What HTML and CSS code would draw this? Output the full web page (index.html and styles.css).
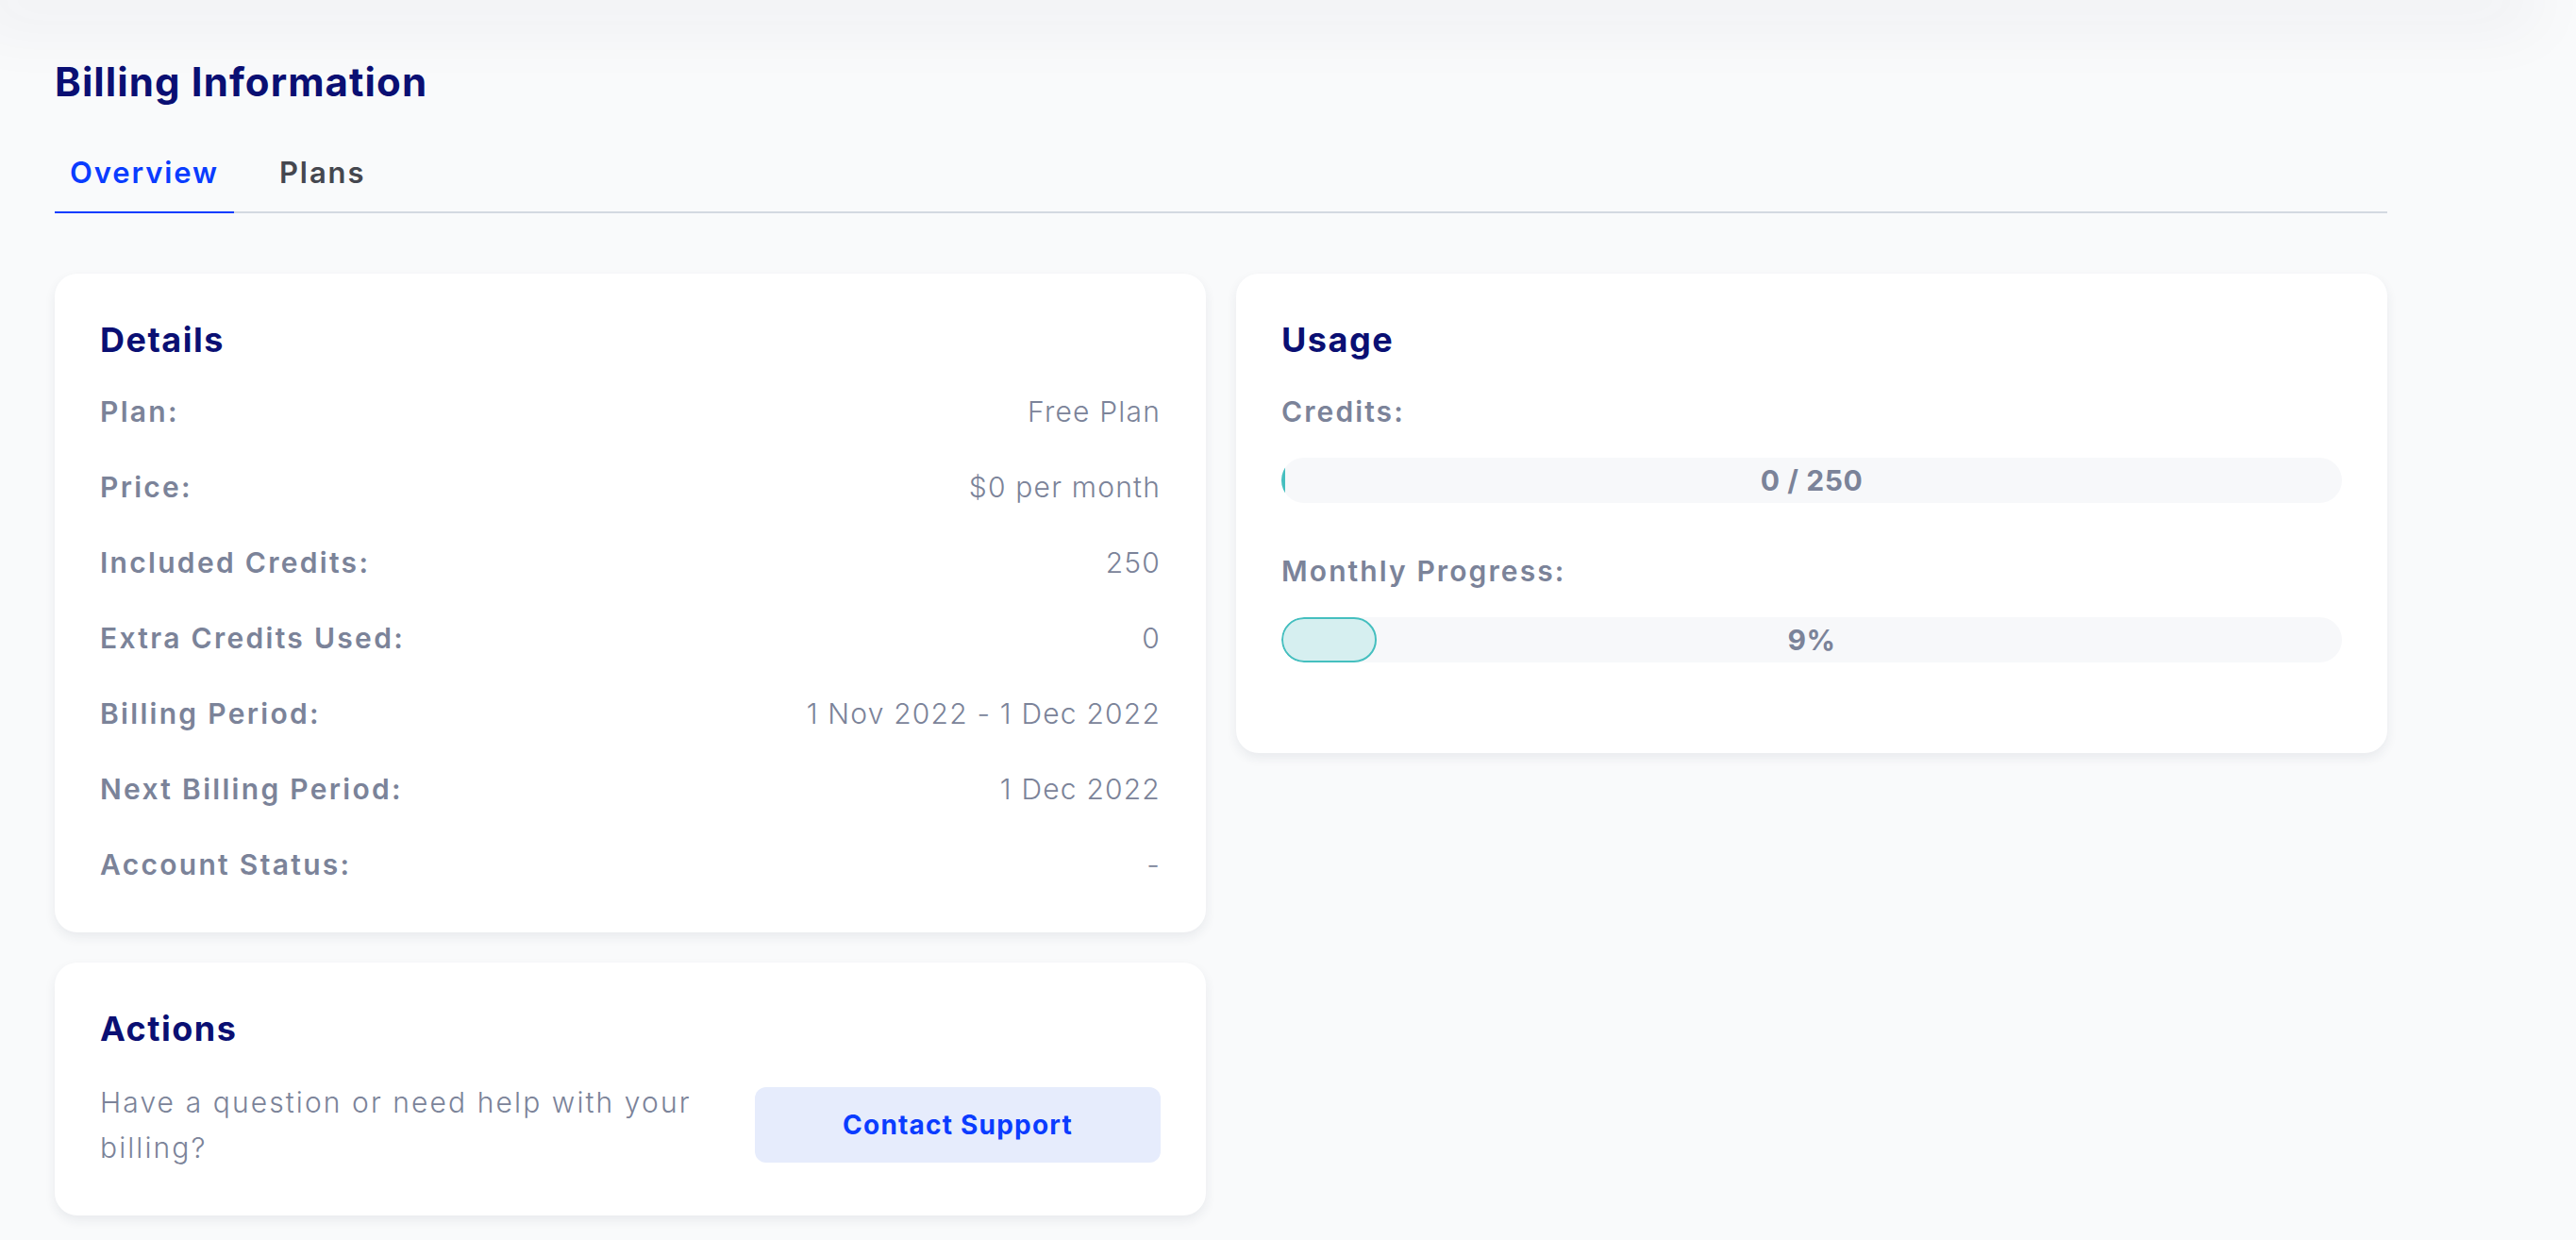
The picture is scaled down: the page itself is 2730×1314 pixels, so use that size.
FILE: index.html
```html
<!DOCTYPE html>
<html lang="en">
<head>
<meta charset="utf-8">
<title>Billing Information</title>
<link rel="stylesheet" href="styles.css">
</head>
<body>
<div class="topbar"></div>
<main class="page">
  <h1 class="page-title">Billing Information</h1>
  <nav class="tabs">
    <a class="tab tab-active">Overview</a>
    <a class="tab">Plans</a>
  </nav>
  <div class="grid">
    <div class="col">
      <section class="card">
        <h2 class="card-title">Details</h2>
        <dl class="rows">
          <div class="row"><dt>Plan:</dt><dd>Free Plan</dd></div>
          <div class="row"><dt>Price:</dt><dd>$0 per month</dd></div>
          <div class="row"><dt>Included Credits:</dt><dd>250</dd></div>
          <div class="row"><dt>Extra Credits Used:</dt><dd>0</dd></div>
          <div class="row"><dt>Billing Period:</dt><dd>1 Nov 2022 - 1 Dec 2022</dd></div>
          <div class="row"><dt>Next Billing Period:</dt><dd>1 Dec 2022</dd></div>
          <div class="row"><dt>Account Status:</dt><dd>-</dd></div>
        </dl>
      </section>
      <section class="card">
        <h2 class="card-title">Actions</h2>
        <div class="actions">
          <p class="actions-text">Have a question or need help with your billing?</p>
          <button class="btn">Contact Support</button>
        </div>
      </section>
    </div>
    <div class="col">
      <section class="card">
        <h2 class="card-title">Usage</h2>
        <div class="usage-group">
          <div class="usage-label">Credits:</div>
          <div class="bar">
            <div class="bar-fill bar-fill-empty" style="width:0%"></div>
            <span class="bar-text">0 / 250</span>
          </div>
        </div>
        <div class="usage-group">
          <div class="usage-label">Monthly Progress:</div>
          <div class="bar">
            <div class="bar-fill" style="width:9%"></div>
            <span class="bar-text">9%</span>
          </div>
        </div>
      </section>
    </div>
  </div>
</main>
</body>
</html>
```

FILE: styles.css
```css
* { box-sizing: border-box; }
html, body { margin: 0; padding: 0; }
body {
  background: #f9fafb;
  font-family: "Inter", "Liberation Sans", sans-serif;
  color: #7b8399;
  height: 1314px;
  overflow: hidden;
}
.topbar {
  height: 0;
  width: 2660px;
  border-radius: 0 0 40px 0;
  box-shadow: 0 0 70px 28px rgba(30, 40, 70, 0.05);
}
.page {
  width: 2530px;
  padding-left: 58px;
}
.page-title {
  margin: 61px 0 0;
  font-size: 42px;
  line-height: 52px;
  font-weight: 700;
  color: #0a0f73;
  letter-spacing: 1.1px;
}
.tabs {
  display: flex;
  gap: 32px;
  margin-top: 50px;
  border-bottom: 2px solid #d3d9e1;
}
.tab {
  display: block;
  padding: 0 16px 21px;
  font-size: 31px;
  line-height: 40px;
  font-weight: 600;
  color: #45474f;
  letter-spacing: 1.9px;
  margin-bottom: -2px;
  border-bottom: 2px solid transparent;
}
.tab-active {
  color: #0a3cff;
  border-bottom-color: #0a3cff;
}
.grid {
  display: grid;
  grid-template-columns: 1fr 1fr;
  gap: 32px;
  margin-top: 64px;
  align-items: start;
}
.col {
  display: flex;
  flex-direction: column;
  gap: 32px;
}
.card {
  background: #ffffff;
  border-radius: 24px;
  padding: 48px;
  box-shadow: 0 5px 12px rgba(40, 50, 80, 0.08);
}
.card-title {
  margin: 0;
  font-size: 36px;
  line-height: 44px;
  font-weight: 700;
  color: #0a0f73;
  letter-spacing: 1.5px;
}
.rows {
  margin: 30px 0 0;
  display: flex;
  flex-direction: column;
  gap: 32px;
}
.row {
  display: flex;
  justify-content: space-between;
  font-size: 30px;
  line-height: 48px;
}
.row dt {
  font-weight: 600;
  letter-spacing: 2.3px;
}
.row dd {
  margin: 0;
  font-weight: 300;
  letter-spacing: 1.2px;
}
.actions {
  display: flex;
  align-items: center;
  justify-content: space-between;
  margin-top: 32px;
}
.actions-text {
  margin: 0;
  width: 680px;
  font-size: 30px;
  line-height: 48px;
  font-weight: 300;
  letter-spacing: 2.1px;
}
.btn {
  width: 430px;
  height: 80px;
  border: none;
  border-radius: 12px;
  background: #e6ecfc;
  color: #0a3cff;
  font-family: "Inter", "Liberation Sans", sans-serif;
  font-size: 28px;
  font-weight: 700;
  letter-spacing: 1.2px;
}
.usage-group {
  margin-top: 30px;
  margin-bottom: 48px;
}
.usage-group + .usage-group { margin-top: 0; }
.usage-label {
  font-size: 30px;
  line-height: 48px;
  font-weight: 600;
  letter-spacing: 2.1px;
}
.bar {
  position: relative;
  overflow: hidden;
  margin-top: 25px;
  height: 48px;
  border-radius: 24px;
  background: #f7f8fa;
  display: flex;
  align-items: center;
  justify-content: center;
}
.bar-fill {
  position: absolute;
  left: 0;
  top: 0;
  height: 48px;
  border: 2px solid #45bfbf;
  border-radius: 24px;
  background: #d6eff0;
}
.bar-fill-empty {
  border-width: 0 0 0 4px;
}
.bar-text {
  position: relative;
  font-size: 30px;
  font-weight: 700;
  letter-spacing: 0.6px;
  color: #7b8399;
}
```
